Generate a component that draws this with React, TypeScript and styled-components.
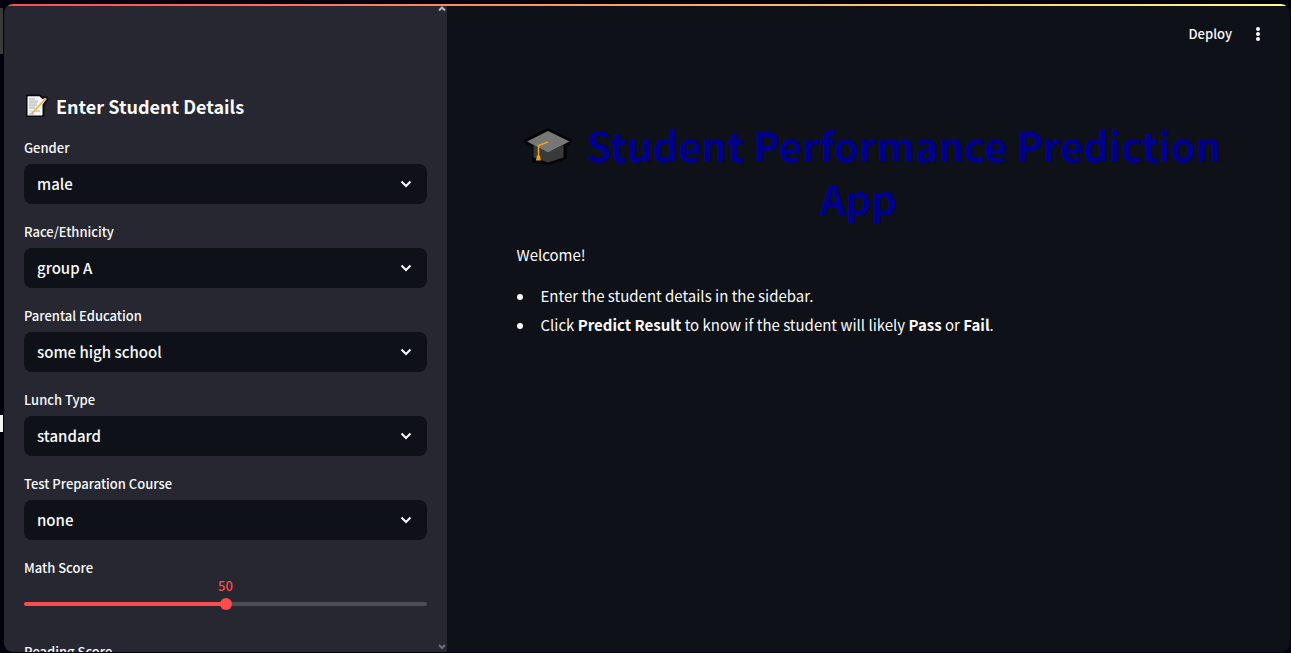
import React, { useId, useState } from "react";
import styled, { createGlobalStyle } from "styled-components";

const GlobalStyle = createGlobalStyle`
  *, *::before, *::after { box-sizing: border-box; }
  body {
    margin: 0;
    background: #00020d;
    color: #fafafa;
    font-family: "Noto Sans CJK JP", "Noto Sans", sans-serif;
    font-size: 15px;
    font-weight: 400;
  }
`;

const Desktop = styled.div`
  display: flex;
  height: 100vh;
  padding: 4px 1px 1px 0;
`;

const EdgeStrip = styled.div`
  display: flex;
  flex-direction: column;
  flex: none;
  width: 3px;
  margin-right: 1px;
  padding-top: 4px;
`;

const EdgeMark = styled.div<{ $tone: string; $size: number; $gap?: number }>`
  flex: none;
  height: ${(p) => p.$size}px;
  margin-top: ${(p) => p.$gap ?? 0}px;
  background: ${(p) => p.$tone};
`;

const Window = styled.div`
  display: flex;
  flex-direction: column;
  flex: 1;
  min-width: 0;
  overflow: hidden;
  border-radius: 9px;
  background: #0e1117;
`;

const Decoration = styled.div`
  flex: none;
  height: 2px;
  background: linear-gradient(90deg, #ff4b4b, #fffd80);
`;

const Body = styled.div`
  display: flex;
  flex: 1;
  min-height: 0;
`;

const SidebarFrame = styled.aside`
  position: relative;
  flex: none;
  width: 443px;
  background: #262730;
`;

const SidebarScroll = styled.div`
  display: flex;
  flex-direction: column;
  gap: 16px;
  height: 100%;
  padding: 86px 20px 0;
  overflow-y: auto;
  scrollbar-width: none;
`;

const ScrollArrow = styled.svg<{ $end?: boolean }>`
  position: absolute;
  right: 1px;
  ${(p) => (p.$end ? "bottom: 2px;" : "top: 0;")}
  width: 8px;
  height: 6px;
  fill: none;
  stroke: ${(p) => (p.$end ? "#6d6e76" : "#b4b5ba")};
  stroke-width: 2;
`;

const SidebarTitle = styled.h2`
  display: flex;
  align-items: center;
  gap: 7px;
  margin: 0;
  font-size: 18px;
  font-weight: 700;
  line-height: 28px;

  svg {
    width: 25px;
    height: 24px;
  }
`;

const Field = styled.div`
  display: flex;
  flex-direction: column;
  flex: none;
`;

const FieldLabel = styled.label`
  height: 28px;
  font-size: 13px;
  font-weight: 500;
  line-height: 24px;
`;

const SelectBox = styled.div`
  position: relative;

  svg {
    position: absolute;
    top: 16px;
    right: 15px;
    width: 12px;
    height: 8px;
    fill: none;
    stroke: #fafafa;
    stroke-width: 2;
    pointer-events: none;
  }
`;

const Select = styled.select`
  display: block;
  width: 100%;
  height: 40px;
  padding: 0 40px 2px 13px;
  border: 0;
  border-radius: 8px;
  appearance: none;
  background: #0e1117;
  color: inherit;
  font: inherit;
  font-weight: 500;
`;

const SliderBox = styled.div`
  position: relative;
  height: 40px;
`;

const SliderValue = styled.output`
  position: absolute;
  top: -8px;
  color: #ff4b4b;
  font-size: 13px;
  font-weight: 500;
  line-height: 20px;
  transform: translateX(-50%);
`;

const Slider = styled.input<{ $value: number }>`
  display: block;
  width: 100%;
  height: 12px;
  margin: 14px 0 0;
  appearance: none;
  background: transparent;

  &::-webkit-slider-runnable-track {
    height: 4px;
    border-radius: 2px;
    background: linear-gradient(
      90deg,
      #ff4b4b ${(p) => p.$value}%,
      #4c4d57 ${(p) => p.$value}%
    );
  }

  &::-webkit-slider-thumb {
    width: 12px;
    height: 12px;
    margin-top: -4px;
    border-radius: 50%;
    appearance: none;
    background: #ff4b4b;
  }
`;

const Main = styled.main`
  display: flex;
  flex-direction: column;
  flex: 1;
  min-width: 0;
  overflow-y: auto;
`;

const Toolbar = styled.header`
  display: flex;
  align-items: center;
  justify-content: flex-end;
  gap: 14px;
  flex: none;
  height: 56px;
  padding-right: 20px;
`;

const ToolButton = styled.button`
  display: flex;
  align-items: center;
  justify-content: center;
  min-width: 24px;
  height: 28px;
  padding: 0;
  border: 0;
  background: transparent;
  color: inherit;
  font: inherit;
  font-size: 13px;
  font-weight: 500;
  line-height: 18px;

  svg {
    width: 4px;
    height: 14px;
    fill: #fafafa;
  }
`;

const Content = styled.section`
  width: 100%;
  max-width: 736px;
  margin: 0 auto;
  padding: 57px 8px 16px 16px;
`;

const Title = styled.h1`
  margin: 0;
  color: #00008b;
  font-size: 40px;
  font-weight: 700;
  line-height: 53px;
  text-align: center;

  svg {
    width: 50px;
    height: 40px;
    margin-right: 4px;
    vertical-align: -5px;
  }
`;

const AnchorSpace = styled.span`
  display: inline-block;
  width: 28px;
`;

const Intro = styled.p`
  margin: 17px 0 15px;
  line-height: 26px;
`;

const Steps = styled.ul`
  margin: 0;
  padding-left: 18px;
  line-height: 26px;

  li {
    margin-bottom: 3px;
    padding-left: 6px;
  }
`;

const MemoIcon = () => (
  <svg viewBox="0 0 25 24" aria-hidden="true">
    <path d="M3 1.500H16l2.500 2.500 3-1 2 2-4 6V22H3z" fill="#f3f3f1" stroke="#0b0b0d" strokeWidth="2" strokeLinejoin="round" />
    <path d="M3.500 2.500H15.500L18 5V21.500H3.500z" fill="#f5f5f2" />
    <path d="M5 5h6M5 8h9M5 11h8M5 14h6M10 17h6M5 20h5" stroke="#aaabad" strokeWidth="1" />
    <path d="M5 6.500h9M5 9.500h8M5 12.500h6M5 17h3" stroke="#d9d9d6" strokeWidth="1" />
    <path d="M8.500 18.500L20.500 6" stroke="#f5b82e" strokeWidth="1.800" />
    <path d="M20 6.500l2-2.200" stroke="#e9a7a4" strokeWidth="2.400" />
    <path d="M7 20l2.500-.8-1.600-1.600z" fill="#d49b64" />
  </svg>
);

const CapIcon = () => (
  <svg viewBox="0 0 50 40" aria-hidden="true">
    <path d="M25 2.500L48 13.500V15L42.500 18.500V31L25 37 17 34.500H10.500V20L2 15V13.500z" fill="#050506" stroke="#050506" strokeWidth="2.500" strokeLinejoin="round" />
    <path d="M10.500 18L25 25.500 40.500 18V30.500L25 35.500 10.500 30.500z" fill="#393b3b" />
    <path d="M25 4L46.500 14.500 25 25.500 4 14.500z" fill="#777" />
    <path d="M25 15L15.500 18.500V30" fill="none" stroke="#f2a30f" strokeWidth="1.500" />
    <path d="M14 28.500h3l.8 5h-4.800z" fill="#f2a30f" />
  </svg>
);

const ChevronDown = () => (
  <svg viewBox="0 0 12 8" aria-hidden="true">
    <path d="M1.500 1.500L6 6l4.500-4.500" />
  </svg>
);

type SelectFieldProps = { label: string; options: string[] };

const SelectField = ({ label, options }: SelectFieldProps) => {
  const id = useId();
  return (
    <Field>
      <FieldLabel htmlFor={id}>{label}</FieldLabel>
      <SelectBox>
        <Select id={id}>
          {options.map((o) => (
            <option key={o}>{o}</option>
          ))}
        </Select>
        <ChevronDown />
      </SelectBox>
    </Field>
  );
};

const SliderField = ({ label }: { label: string }) => {
  const id = useId();
  const [value, setValue] = useState(50);
  return (
    <Field>
      <FieldLabel htmlFor={id}>{label}</FieldLabel>
      <SliderBox>
        <SliderValue htmlFor={id} style={{ left: `${value}%` }}>
          {value}
        </SliderValue>
        <Slider
          id={id}
          type="range"
          min={0}
          max={100}
          value={value}
          $value={value}
          onChange={(e) => setValue(Number(e.target.value))}
        />
      </SliderBox>
    </Field>
  );
};

const selects: SelectFieldProps[] = [
  { label: "Gender", options: ["male", "female"] },
  { label: "Race/Ethnicity", options: ["group A", "group B", "group C", "group D", "group E"] },
  {
    label: "Parental Education",
    options: ["some high school", "high school", "some college", "associate's degree", "bachelor's degree", "master's degree"],
  },
  { label: "Lunch Type", options: ["standard", "free/reduced"] },
  { label: "Test Preparation Course", options: ["none", "completed"] },
];

export default function App() {
  return (
    <>
      <GlobalStyle />
      <Desktop>
        <EdgeStrip>
          <EdgeMark $tone="#3a3a3a" $size={46} />
          <EdgeMark $tone="#f4f6f2" $size={17} $gap={361} />
        </EdgeStrip>
        <Window>
          <Decoration />
          <Body>
            <SidebarFrame>
              <SidebarScroll>
                <SidebarTitle>
                  <MemoIcon />
                  Enter Student Details
                </SidebarTitle>
                {selects.map((s) => (
                  <SelectField key={s.label} {...s} />
                ))}
                <SliderField label="Math Score" />
                <SliderField label="Reading Score" />
              </SidebarScroll>
              <ScrollArrow viewBox="0 0 8 6" aria-hidden="true">
                <path d="M1 4.500l3-3 3 3" />
              </ScrollArrow>
              <ScrollArrow $end viewBox="0 0 8 6" aria-hidden="true">
                <path d="M1 1l3 3 3-3" />
              </ScrollArrow>
            </SidebarFrame>
            <Main>
              <Toolbar>
                <ToolButton type="button">Deploy</ToolButton>
                <ToolButton type="button" aria-label="Main menu">
                  <svg viewBox="0 0 4 14">
                    <circle cx="2" cy="2" r="2" />
                    <circle cx="2" cy="7" r="2" />
                    <circle cx="2" cy="12" r="2" />
                  </svg>
                </ToolButton>
              </Toolbar>
              <Content>
                <Title>
                  <CapIcon /> Student Performance Prediction App
                  <AnchorSpace />
                </Title>
                <Intro>Welcome!</Intro>
                <Steps>
                  <li>Enter the student details in the sidebar.</li>
                  <li>
                    Click <strong>Predict Result</strong> to know if the student will likely{" "}
                    <strong>Pass</strong> or <strong>Fail</strong>.
                  </li>
                </Steps>
              </Content>
            </Main>
          </Body>
        </Window>
      </Desktop>
    </>
  );
}
